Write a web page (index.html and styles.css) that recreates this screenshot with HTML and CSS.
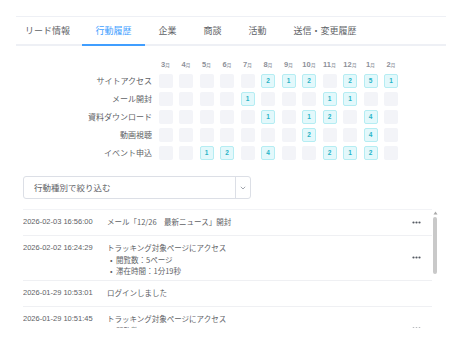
FILE: index.html
```html
<!DOCTYPE html>
<html lang="ja">
<head>
<meta charset="utf-8">
<link rel="stylesheet" href="styles.css">
</head>
<body>
<div class="page">
  <nav class="tabs">
    <div class="tab first">リード情報</div>
    <div class="tab active">行動履歴</div>
    <div class="tab">企業</div>
    <div class="tab">商談</div>
    <div class="tab">活動</div>
    <div class="tab">送信・変更履歴</div>
  </nav>

  <div class="content">
    <div class="heatmap" id="heatmap"></div>

    <div class="filter">
      <div class="filter-text">行動種別で絞り込む</div>
      <div class="filter-arrow">
        <svg width="6" height="4" viewBox="0 0 6 4"><path d="M0.8 0.8 L3 3 L5.2 0.8" fill="none" stroke="#8a8f99" stroke-width="0.8"/></svg>
      </div>
    </div>

    <div class="list-wrap">
      <div class="list">
        <div class="row">
          <div class="date">2026-02-03 16:56:00</div>
          <div class="desc"><div class="title">メール「12/26　最新ニュース」開封</div></div>
          <div class="more"><svg width="9" height="3" viewBox="0 0 9 3"><circle cx="1.5" cy="1.5" r="1.1"/><circle cx="4.5" cy="1.5" r="1.1"/><circle cx="7.5" cy="1.5" r="1.1"/></svg></div>
        </div>
        <div class="row">
          <div class="date">2026-02-02 16:24:29</div>
          <div class="desc">
            <div class="title">トラッキング対象ページにアクセス</div>
            <ul class="bullets">
              <li>閲覧数：5ページ</li>
              <li>滞在時間：1分19秒</li>
            </ul>
          </div>
          <div class="more"><svg width="9" height="3" viewBox="0 0 9 3"><circle cx="1.5" cy="1.5" r="1.1"/><circle cx="4.5" cy="1.5" r="1.1"/><circle cx="7.5" cy="1.5" r="1.1"/></svg></div>
        </div>
        <div class="row">
          <div class="date">2026-01-29 10:53:01</div>
          <div class="desc"><div class="title">ログインしました</div></div>
          <div class="more"></div>
        </div>
        <div class="row">
          <div class="date">2026-01-29 10:51:45</div>
          <div class="desc">
            <div class="title">トラッキング対象ページにアクセス</div>
            <ul class="bullets">
              <li>閲覧数：3ページ</li>
              <li>滞在時間：0分42秒</li>
            </ul>
          </div>
          <div class="more"><svg width="9" height="3" viewBox="0 0 9 3"><circle cx="1.5" cy="1.5" r="1.1"/><circle cx="4.5" cy="1.5" r="1.1"/><circle cx="7.5" cy="1.5" r="1.1"/></svg></div>
        </div>
      </div>
      <div class="scrollbar">
        <svg class="sb-arrow" width="5" height="4" viewBox="0 0 5 4"><path d="M2.5 0.5 L4.5 3.5 L0.5 3.5 Z" fill="#a8a8a8"/></svg>
        <div class="sb-thumb"></div>
      </div>
    </div>
  </div>
</div>
<script>
(function(){
  var months = ['3','4','5','6','7','8','9','10','11','12','1','2'];
  var rows = [
    ['サイトアクセス', [0,0,0,0,0,2,1,2,0,2,5,1]],
    ['メール開封', [0,0,0,0,1,0,0,0,1,1,0,0]],
    ['資料ダウンロード', [0,0,0,0,0,1,0,1,2,0,4,0]],
    ['動画視聴', [0,0,0,0,0,0,0,2,0,0,4,0]],
    ['イベント申込', [0,0,1,2,0,4,0,0,2,1,2,0]]
  ];
  var h = document.getElementById('heatmap');
  var html = '<div class="hm-corner"></div>';
  months.forEach(function(m){ html += '<div class="hm-month">' + m + '<span>月</span></div>'; });
  rows.forEach(function(r){
    html += '<div class="hm-label">' + r[0] + '</div>';
    r[1].forEach(function(v){
      html += v ? '<div class="hm-cell on">' + v + '</div>' : '<div class="hm-cell"></div>';
    });
  });
  h.innerHTML = html;
})();
</script>
</body>
</html>
```

FILE: styles.css
```css
html, body {
  margin: 0;
  padding: 0;
  height: 344px;
  overflow: hidden;
  background: #ffffff;
}
body {
  font-family: "Noto Sans CJK JP", "Liberation Sans", sans-serif;
  color: #606266;
}
.page {
  padding: 16px 16px 0 16px;
}
.tabs {
  display: flex;
  border-top: 1px solid #eef0f5;
  border-bottom: 2px solid #eef0f5;
  height: 27px;
}
.tab {
  padding: 0 13.5px;
  font-size: 9px;
  line-height: 27px;
  color: #606266;
  white-space: nowrap;
}
.tab.first {
  padding-left: 9px;
  padding-right: 12px;
}
.tab.active {
  color: #409eff;
  border-bottom: 2px solid #409eff;
  margin-bottom: -2px;
  height: 27px;
}
.content {
  padding: 0 0 0 7px;
}
.heatmap {
  display: grid;
  grid-template-columns: 129px repeat(12, 14px);
  grid-auto-rows: 14px;
  grid-template-rows: 10px;
  column-gap: 6.5px;
  row-gap: 4px;
  margin-top: 14px;
}
.hm-month {
  font-family: "Liberation Sans", sans-serif;
  font-size: 7.5px;
  font-weight: bold;
  color: #8c9099;
  text-align: center;
  line-height: 10px;
  white-space: nowrap;
  display: flex;
  justify-content: center;
  align-items: baseline;
}
.hm-month span {
  font-family: "Noto Sans CJK JP", sans-serif;
  font-size: 5px;
  font-weight: normal;
}
.hm-label {
  font-size: 8px;
  color: #606266;
  text-align: right;
  line-height: 14px;
  white-space: nowrap;
}
.hm-cell {
  background: #f3f4f8;
  border-radius: 2px;
  box-sizing: border-box;
}
.hm-cell.on {
  background: #e3f8fb;
  border: 1px solid #b5edf3;
  color: #27b3c6;
  font-family: "Liberation Sans", sans-serif;
  font-size: 6.5px;
  font-weight: bold;
  line-height: 12px;
  text-align: center;
}
.filter {
  margin-top: 16px;
  width: 228px;
  height: 23px;
  box-sizing: border-box;
  border: 1px solid #dcdfe6;
  border-radius: 3px;
  display: flex;
}
.filter-text {
  flex: 1;
  font-size: 8.5px;
  color: #606266;
  line-height: 21px;
  padding-left: 10px;
}
.filter-arrow {
  width: 14px;
  border-left: 1px solid #dcdfe6;
  display: flex;
  align-items: center;
  justify-content: center;
}
.list-wrap {
  margin-top: 10px;
  display: flex;
  width: 415px;
  height: 119px;
  overflow: hidden;
}
.list {
  width: 409px;
  border-top: 1px solid #f2f3f6;
  align-self: flex-start;
}
.row {
  display: flex;
  border-bottom: 1px solid #eff0f3;
  padding: 6px 0 7px 0;
}
.date {
  width: 84px;
  font-family: "Liberation Sans", sans-serif;
  font-size: 7.5px;
  line-height: 12px;
  color: #606266;
  white-space: nowrap;
}
.desc {
  flex: 1;
  font-size: 7.5px;
  line-height: 12px;
  color: #606266;
}
.title {
  white-space: nowrap;
}
.bullets {
  list-style: none;
  margin: 0 0 -3px 0;
  padding: 0;
  font-size: 7.5px;
  line-height: 11px;
}
.bullets li::before {
  content: "•";
  display: inline-block;
  width: 6px;
  padding-left: 3px;
}
.more {
  width: 20px;
  display: flex;
  align-items: center;
  justify-content: flex-start;
  fill: #555a63;
}
.scrollbar {
  width: 6px;
  display: flex;
  flex-direction: column;
  align-items: center;
  padding-top: 2px;
}
.sb-arrow {
  display: block;
}
.sb-thumb {
  margin-top: 2px;
  width: 4px;
  height: 57px;
  border-radius: 2px;
  background: #c9c9c9;
}
```
